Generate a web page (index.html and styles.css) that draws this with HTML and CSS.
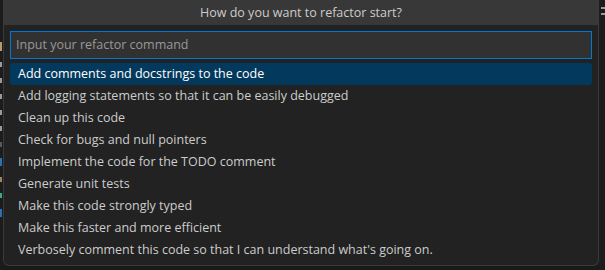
FILE: index.html
```html
<!DOCTYPE html>
<html>
<head>
<meta charset="utf-8">
<link rel="stylesheet" href="styles.css">
</head>
<body>
<div class="screen">
  <div class="editor-left">
    <div class="frag f-y"></div>
    <div class="frag f-g"></div>
    <div class="frag f-g"></div>
    <div class="frag f-g"></div>
    <div class="frag f-g"></div>
    <div class="frag f-g"></div>
    <div class="frag f-d"></div>
    <div class="frag f-b"></div>
    <div class="frag f-o"></div>
    <div class="frag f-t"></div>
    <div class="frag f-b"></div>
  </div>
  <div class="widget">
    <div class="title">How do you want to refactor start?</div>
    <div class="body">
      <div class="input">Input your refactor command</div>
      <ul class="list">
        <li class="item selected">Add comments and docstrings to the code</li>
        <li class="item">Add logging statements so that it can be easily debugged</li>
        <li class="item">Clean up this code</li>
        <li class="item">Check for bugs and null pointers</li>
        <li class="item">Implement the code for the TODO comment</li>
        <li class="item">Generate unit tests</li>
        <li class="item">Make this code strongly typed</li>
        <li class="item">Make this faster and more efficient</li>
        <li class="item">Verbosely comment this code so that I can understand what's going on.</li>
      </ul>
    </div>
  </div>
  <div class="editor-right">
    <div class="rline"></div>
    <div class="rline"></div>
  </div>
</div>
</body>
</html>
```
FILE: styles.css
```css
* { box-sizing: border-box; }
html, body {
  margin: 0;
  padding: 0;
  width: 605px;
  height: 270px;
  overflow: hidden;
  background: #1a1a1a;
  font-family: "Open Sans", "Noto Sans", sans-serif;
}
.screen {
  display: flex;
  height: 270px;
}
.editor-left {
  width: 3px;
  flex: none;
  overflow: hidden;
  background: #1c1c1c;
  padding-top: 42px;
  display: flex;
  flex-direction: column;
  gap: 11px;
}
.frag {
  height: 5px;
  width: 2px;
}
.f-y { background: #b89a6a; height: 9px; }
.f-g { background: #9a9a9a; }
.f-d { background: #5a5a5a; }
.f-b { background: #2a6fb8; height: 8px; }
.f-o { background: #9a8a5a; }
.f-t { background: #3aa88a; }
.widget {
  width: 596px;
  flex: none;
  height: 266px;
  background: #222222;
  border: 1px solid #3a3a3a;
  border-top: none;
  border-radius: 0 0 6px 6px;
  display: flex;
  flex-direction: column;
  overflow: hidden;
}
.title {
  height: 25px;
  flex: none;
  background: #383838;
  color: #cccccc;
  font-size: 12.5px;
  text-align: center;
  line-height: 26px;
}
.body {
  padding: 6px 6px 0 6px;
}
.input {
  height: 28px;
  border: 1px solid #0078d4;
  background: #313131;
  color: #989898;
  font-size: 12.5px;
  line-height: 26px;
  padding-left: 5px;
}
.list {
  list-style: none;
  margin: 4px 0 0 0;
  padding: 0;
}
.item {
  height: 22px;
  line-height: 22px;
  padding-left: 8px;
  color: #cccccc;
  font-size: 12.5px;
  border-radius: 3px;
  white-space: nowrap;
}
.item.selected {
  background: #04395e;
  color: #ffffff;
}
.editor-right {
  flex: 1;
  background: #1c1c1c;
  padding-top: 7px;
}
.rline {
  height: 2px;
  margin-bottom: 4px;
  background: #9a9a9a;
  margin-left: 2px;
}
```
